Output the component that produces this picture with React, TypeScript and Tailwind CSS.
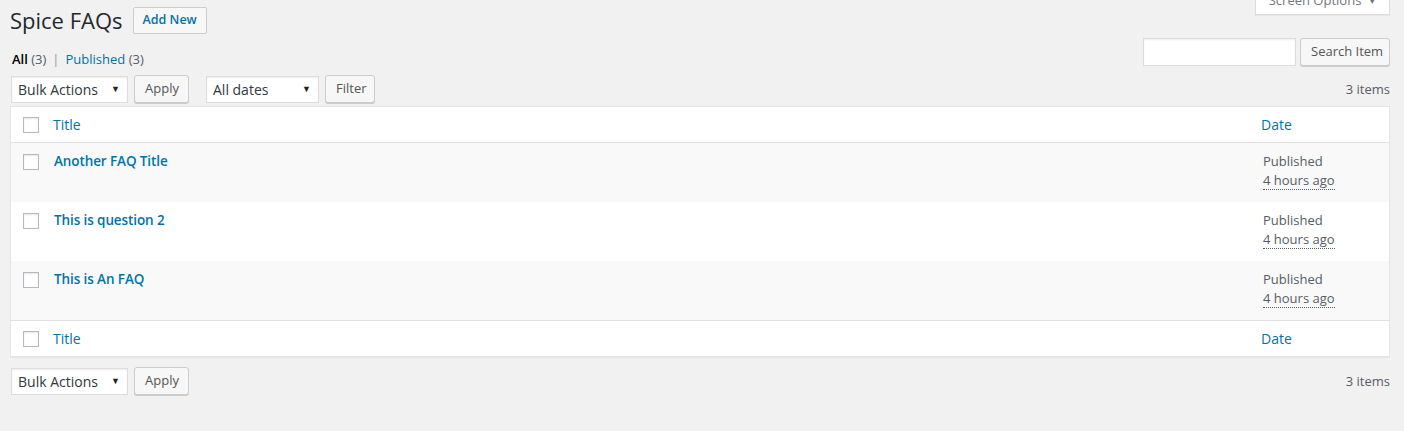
import { useState } from "react";

type Faq = { id: number; title: string; status: string; when: string };

const faqs: Faq[] = [
  { id: 1, title: "Another FAQ Title", status: "Published", when: "4 hours ago" },
  { id: 2, title: "This is question 2", status: "Published", when: "4 hours ago" },
  { id: 3, title: "This is An FAQ", status: "Published", when: "4 hours ago" },
];

function Checkbox() {
  const [on, setOn] = useState(false);
  return (
    <button
      onClick={() => setOn(!on)}
      className="w-[16px] h-[16px] border border-[#b4b9be] bg-white shadow-[inset_0_1px_2px_rgba(0,0,0,0.1)] flex items-center justify-center text-[#1e8cbe] text-[12px] leading-none"
    >
      {on ? "✓" : ""}
    </button>
  );
}

function Select({ label, width }: { label: string; width: string }) {
  return (
    <div
      className={`${width} h-[27px] bg-white border border-[#ddd] shadow-[inset_0_1px_2px_rgba(0,0,0,0.07)] flex items-center justify-between pl-[6px] pr-[7px] text-[14px] text-[#32373c]`}
    >
      <span>{label}</span>
      <span className="text-[9px] text-[#222]">▼</span>
    </div>
  );
}

function Btn({ children, className = "" }: { children: React.ReactNode; className?: string }) {
  return (
    <button
      className={`h-[28px] px-[10px] border border-[#ccc] bg-[#f7f7f7] rounded-[3px] shadow-[0_1px_0_#ccc] text-[13px] text-[#555] whitespace-nowrap ${className}`}
    >
      {children}
    </button>
  );
}

function BulkBar({ withFilter }: { withFilter?: boolean }) {
  return (
    <div className="flex items-center h-[28px]">
      <Select label="Bulk Actions" width="w-[117px]" />
      <Btn className="ml-[6px] w-[55px]">Apply</Btn>
      {withFilter && (
        <>
          <Select label="All dates" width="w-[113px] ml-[17px]" />
          <Btn className="ml-[6px] w-[50px]">Filter</Btn>
        </>
      )}
      <span className="ml-auto pt-[2px] text-[13px] text-[#555d66]">3 items</span>
    </div>
  );
}

function HeadRow({ border }: { border: "b" | "t" }) {
  return (
    <div
      className={`flex h-[36px] ${border === "b" ? "border-b" : "border-t"} border-[#e1e1e1] bg-white`}
    >
      <div className="w-[42px] pl-[12px] pt-[10px]">
        <Checkbox />
      </div>
      <div className="flex-1 flex items-center text-[14px] text-[#0073aa]">Title</div>
      <div className="w-[128px] flex items-center text-[14px] text-[#0073aa]">Date</div>
    </div>
  );
}

export default function App() {
  return (
    <div
      className="min-h-screen bg-[#f1f1f1] pl-[10px] pr-[14px] text-[13px] text-[#444]"
      style={{ fontFamily: '"Open Sans", "Noto Sans", sans-serif' }}
    >
      <div className="flex items-start h-[38px]">
        <div className="flex items-center pt-[6px]">
          <h1 className="text-[22px] font-normal text-[#23282d] leading-[29px]">Spice FAQs</h1>
          <button className="ml-[10px] h-[27px] px-[9px] border border-[#ccc] bg-[#f7f7f7] rounded-[2px] text-[12.5px] font-semibold text-[#0073aa]">
            Add New
          </button>
        </div>
        <div className="ml-auto -mt-[12px] h-[27px] w-[135px] bg-white border border-[#ddd] border-t-0 shadow-[0_1px_1px_rgba(0,0,0,0.04)] flex items-center justify-center gap-[7px] text-[13px] text-[#72777c]">
          <span>Screen Options</span>
          <span className="text-[8px]">▼</span>
        </div>
      </div>

      <div className="flex items-start h-[28px]">
        <div className="pt-[12px] pl-[2px] text-[13px] leading-[18px]">
          <span className="font-semibold text-black">All</span>{" "}
          <span className="text-[#555d66]">(3)</span>
          <span className="mx-[6px] text-[#999]">|</span>
          <a className="text-[#0073aa]">Published</a>{" "}
          <span className="text-[#555d66]">(3)</span>
        </div>
        <div className="ml-auto flex items-center">
          <input className="w-[153px] h-[28px] bg-white border border-[#ddd] shadow-[inset_0_1px_2px_rgba(0,0,0,0.07)] outline-none" />
          <Btn className="ml-[4px] w-[90px] px-0">Search Item</Btn>
        </div>
      </div>

      <div className="mt-[9px] pl-[1px]">
        <BulkBar withFilter />
      </div>

      <div className="mt-[3px] border border-[#e5e5e5] shadow-[0_1px_1px_rgba(0,0,0,0.04)] bg-white">
        <HeadRow border="b" />
        {faqs.map((f, i) => (
          <div
            key={f.id}
            className={`flex h-[59px] ${i % 2 === 0 ? "bg-[#f9f9f9]" : "bg-white"}`}
          >
            <div className="w-[43px] pl-[12px] pt-[11px]">
              <Checkbox />
            </div>
            <div className="flex-1 pt-[8px] text-[13.5px] leading-[20px] font-semibold text-[#0073aa] tracking-[-0.1px]">
              {f.title}
            </div>
            <div className="w-[126px] pt-[9px] text-[13px] leading-[19px] text-[#555d66]">
              <div>{f.status}</div>
              <abbr className="no-underline border-b border-dotted border-[#555d66] cursor-help">
                {f.when}
              </abbr>
            </div>
          </div>
        ))}
        <HeadRow border="t" />
      </div>

      <div className="mt-[10px] pl-[1px]">
        <BulkBar />
      </div>
    </div>
  );
}
